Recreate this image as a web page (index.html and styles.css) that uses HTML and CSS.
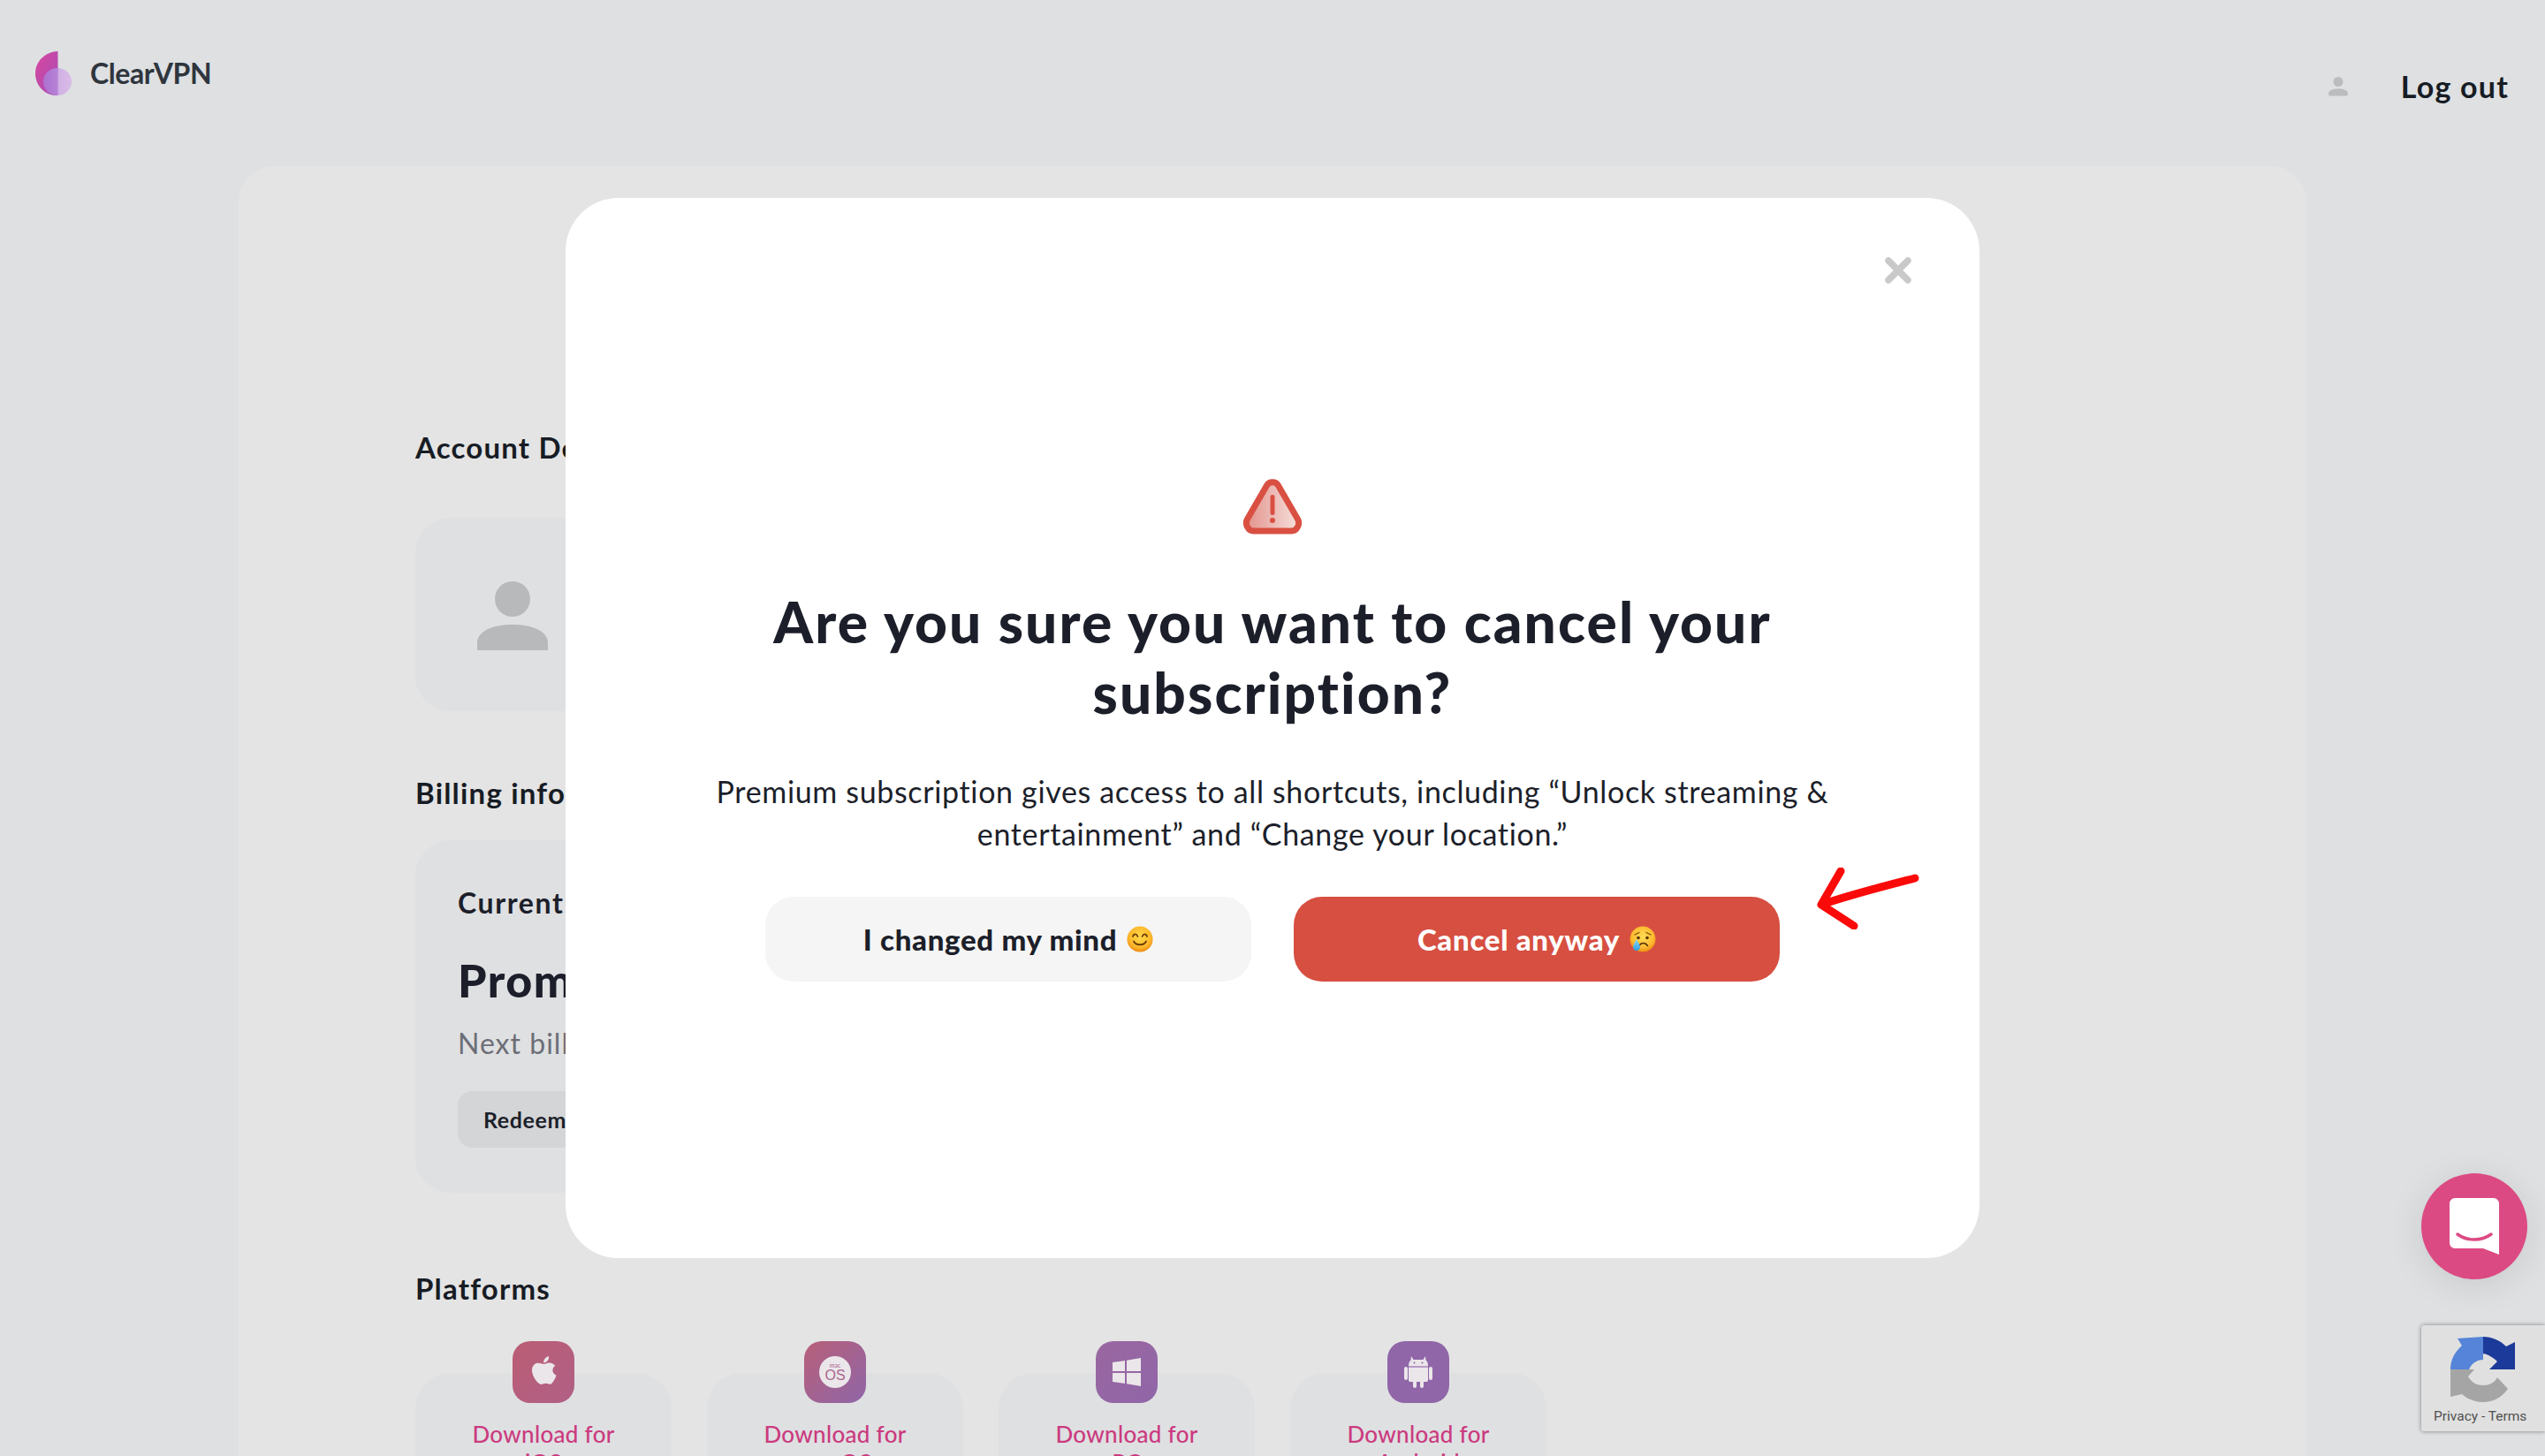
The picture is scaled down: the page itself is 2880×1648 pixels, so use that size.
FILE: index.html
```html
<!DOCTYPE html>
<html lang="en">
<head>
<meta charset="utf-8">
<title>ClearVPN</title>
<link rel="stylesheet" href="styles.css">
</head>
<body>
<header class="topbar">
  <div class="brand">
    <svg class="brand-logo" viewBox="0 0 41 50" aria-hidden="true">
      <defs>
        <linearGradient id="lg1" x1="0" y1="0" x2="1" y2="1"><stop offset="0" stop-color="#d8469c"/><stop offset="1" stop-color="#a84cb8"/></linearGradient>
        <linearGradient id="lg2" x1="0" y1="0" x2="1" y2="0"><stop offset="0" stop-color="#ad70d0"/><stop offset=".5" stop-color="#b683d6"/><stop offset=".55" stop-color="#d2b0e4"/><stop offset="1" stop-color="#d9bce6"/></linearGradient>
      </defs>
      <path d="M25.500 0C10 1 0 12 0 25C0 38 9 49 23 50L25.500 50Z" fill="url(#lg1)"/>
      <ellipse cx="25" cy="34.500" rx="16" ry="15.500" fill="url(#lg2)"/>
    </svg>
    <span class="brand-name">ClearVPN</span>
  </div>
  <nav class="account-nav">
    <svg class="nav-user" viewBox="0 0 22 22" aria-hidden="true"><ellipse cx="11" cy="5.500" rx="5.500" ry="5.500" fill="#bbbcbe"/><path d="M0 19C0 15 5 13.500 11 13.500C17 13.500 22 15 22 19C22 21 21 21.500 20 21.500H2C1 21.500 0 21 0 19Z" fill="#bbbcbe"/></svg>
    <a class="logout">Log out</a>
  </nav>
</header>

<main class="panel">
  <section class="section section-account">
    <h2 class="section-title">Account Details</h2>
    <div class="card card-account">
      <svg class="avatar" viewBox="0 0 80 78" aria-hidden="true"><ellipse cx="40" cy="20" rx="20" ry="20" fill="#b8b9bb"/><path d="M0 70C0 56 18 49 40 49C62 49 80 56 80 70V78H0Z" fill="#b8b9bb"/></svg>
    </div>
  </section>
  <section class="section section-billing">
    <h2 class="section-title">Billing info</h2>
    <div class="card card-billing">
      <div class="plan-label">Current plan</div>
      <div class="plan-name">Promo plan</div>
      <div class="plan-next">Next billing date</div>
      <button class="redeem">Redeem code</button>
    </div>
  </section>
  <section class="section section-platforms">
    <h2 class="section-title">Platforms</h2>
    <div class="platforms">
      <div class="platform">
        <span class="platform-icon icon-ios"><svg viewBox="0 0 30 36" width="30" height="36" aria-hidden="true"><path d="M15.500 9C17 9 19 7.500 21.500 7.500C24.500 7.500 26.800 9 28.200 11C24 13.500 24.700 19.800 29.500 21.800C28.500 25 26 30 23.500 31.500C21.500 32.500 20 30.800 17.500 30.800C15 30.800 13.500 32.500 11.500 31.800C7 30 1.500 21 2 15C2.400 10.500 5.500 7.800 9 7.800C11.500 7.800 13.500 9 15.500 9Z" fill="#ebe6ea"/><path d="M15 7.500C15 4 17.500 1 21 0C21.500 3.500 19 7.500 15 7.500Z" fill="#ebe6ea"/></svg></span>
        <a class="platform-link">Download for iOS</a>
      </div>
      <div class="platform">
        <span class="platform-icon icon-mac"><span class="mac-badge"><span class="mac-small">mac</span><span class="mac-os">OS</span></span></span>
        <a class="platform-link">Download for macOS</a>
      </div>
      <div class="platform">
        <span class="platform-icon icon-win"><svg viewBox="0 0 32 32" width="32" height="32" aria-hidden="true"><path d="M0 5L14 3V15H0ZM16 2.700L32 0V15H16ZM0 17H14V29L0 27ZM16 17H32V32L16 29.300Z" fill="#ebe6ea"/></svg></span>
        <a class="platform-link">Download for PC</a>
      </div>
      <div class="platform">
        <span class="platform-icon icon-android"><svg viewBox="0 0 32 36" width="32" height="36" aria-hidden="true"><path d="M8 0L10.500 4H21.500L24 0L24.500 4.500C26.500 6 27 9 27 11H5C5 9 5.500 6 7.500 4.500Z" fill="#ebe6ea"/><path d="M5 12.500H27V27C27 28.500 26 29 25 29H7C6 29 5 28.500 5 27Z" fill="#ebe6ea"/><rect x="0" y="12" width="4" height="15" rx="2" fill="#ebe6ea"/><rect x="28" y="12" width="4" height="15" rx="2" fill="#ebe6ea"/><rect x="10" y="27" width="4" height="9" rx="2" fill="#ebe6ea"/><rect x="18" y="27" width="4" height="9" rx="2" fill="#ebe6ea"/><circle cx="11.500" cy="7.500" r="1" fill="#9166a6"/><circle cx="20.500" cy="7.500" r="1" fill="#9166a6"/><rect x="5" y="11" width="22" height="2" fill="#b99bc6"/></svg></span>
        <a class="platform-link">Download for Android</a>
      </div>
    </div>
  </section>
</main>

<div class="modal" role="dialog">
  <svg class="modal-close" viewBox="0 0 30 30" aria-hidden="true"><path d="M4 4L26 26M26 4L4 26" stroke="#c9c9c9" stroke-width="7.500" stroke-linecap="round"/></svg>
  <svg class="warning" viewBox="0 0 68 63" aria-hidden="true">
    <defs><linearGradient id="wg" x1="0" y1="0" x2="1" y2="0"><stop offset="0" stop-color="#e2938c"/><stop offset="1" stop-color="#f6e0dc"/></linearGradient></defs>
    <path d="M27.500 7.500C30.500 2.500 37.500 2.500 40.500 7.500L62.500 45.500C65.500 51 62 59 55.500 59H12.500C6 59 2.500 51 5.500 45.500Z" fill="url(#wg)" stroke="#d95042" stroke-width="7" stroke-linejoin="round"/>
    <rect x="31.500" y="18" width="5" height="23" rx="2.500" fill="#d95042"/>
    <circle cx="34" cy="47" r="3" fill="#d95042"/>
  </svg>
  <h1 class="modal-title">Are you sure you want to cancel your subscription?</h1>
  <p class="modal-text">Premium subscription gives access to all shortcuts, including “Unlock streaming &amp; entertainment” and “Change your location.”</p>
  <div class="modal-actions">
    <button class="btn btn-keep">I changed my mind
      <svg class="emoji" viewBox="0 0 30 30" aria-hidden="true"><defs><radialGradient id="eg1" cx=".5" cy=".4" r=".6"><stop offset="0" stop-color="#ffd84a"/><stop offset=".7" stop-color="#fdb92c"/><stop offset="1" stop-color="#ee8a12"/></radialGradient></defs><circle cx="15" cy="15" r="14.500" fill="url(#eg1)"/><path d="M7 12C8 8.500 11 8.500 12.500 12M17.500 12C19 8.500 22 8.500 23 12" fill="none" stroke="#6d3c06" stroke-width="1.800" stroke-linecap="round"/><path d="M8 17.500C10.500 22.500 19.500 22.500 22 17.500" fill="none" stroke="#6d3c06" stroke-width="1.800" stroke-linecap="round"/></svg>
    </button>
    <button class="btn btn-cancel">Cancel anyway
      <svg class="emoji" viewBox="0 0 30 30" aria-hidden="true"><defs><radialGradient id="eg2" cx=".5" cy=".4" r=".6"><stop offset="0" stop-color="#ffdc55"/><stop offset=".7" stop-color="#fdbb30"/><stop offset="1" stop-color="#ee8a12"/></radialGradient><linearGradient id="eg3" x1="0" y1="0" x2="0" y2="1"><stop offset="0" stop-color="#8ed8f5"/><stop offset="1" stop-color="#2f9fe0"/></linearGradient></defs><circle cx="15" cy="15" r="14.500" fill="url(#eg2)"/><circle cx="10" cy="13.500" r="1.800" fill="#5a3408"/><circle cx="20" cy="13.500" r="1.800" fill="#5a3408"/><path d="M6 10L11 7.500M24 10L19 7.500" stroke="#7a4a0c" stroke-width="1.300" stroke-linecap="round"/><path d="M11 22.500C13 18.500 18 18.500 20.500 22.500" fill="none" stroke="#5a3408" stroke-width="1.600" stroke-linecap="round"/><path d="M8 15C6 19 4 21.500 4 24C4 26.500 6 28 8 28C10 28 12 26.500 12 24C12 21.500 10 19 8 15Z" fill="url(#eg3)"/></svg>
    </button>
  </div>
  <svg class="annotation" viewBox="0 0 116 70" aria-hidden="true"><path d="M111 12C80 20 40 30 5 42M27 4L5 42L42 66" fill="none" stroke="#fb0a0a" stroke-width="9" stroke-linecap="round" stroke-linejoin="round"/></svg>
</div>

<button class="chat" aria-label="Chat"><svg viewBox="0 0 56 64" width="56" height="64" aria-hidden="true"><path d="M6 0H50C53 0 56 3 56 6V64L38 57H6C3 57 0 54 0 51V6C0 3 3 0 6 0Z" fill="#fff"/><path d="M9 41C20 49 36 49 47 41" fill="none" stroke="#dc4a83" stroke-width="3.500" stroke-linecap="round"/></svg></button>

<aside class="recaptcha">
  <svg class="recaptcha-logo" viewBox="0 0 74 75" aria-hidden="true">
    <path d="M0 37C0 26 5 17 13 10L8 2L37 0V26C30 26 24 30 21 37Z" fill="#5584d8"/>
    <path d="M37 0C47 0 56 4 63 11L73 6V37H44L53 28C49 24 43 20 37 19Z" fill="#1c3a99"/>
    <path d="M0 37H27L20 45C24 52 30 55 37 55C44 55 50 52 53 46L65 59C58 69 48 74 37 74C28 74 20 71 13 65L0 68Z" fill="#a5a5a5"/>
  </svg>
  <span class="recaptcha-text">Privacy - Terms</span>
</aside>
</body>
</html>
```

FILE: styles.css
```css
* { box-sizing: border-box; }
html, body { margin: 0; height: 1648px; overflow: hidden; }
body {
  position: relative;
  background: #dee0e2;
  font-family: "Lato", "Liberation Sans", sans-serif;
  font-variant-ligatures: none;
  color: #1c1f2a;
}
h1, h2, p { margin: 0; }

.topbar {
  height: 188px;
  padding: 58px 41px 0 40px;
  display: flex;
  justify-content: space-between;
  align-items: flex-start;
}
.brand { display: flex; align-items: center; gap: 21px; }
.brand-logo { width: 41px; height: 50px; }
.brand-name { font-size: 32px; font-weight: 700; color: #2f353d; letter-spacing: -.4px; margin-top: -2px; }
.account-nav { display: flex; align-items: center; gap: 60px; margin-top: 19px; }
.nav-user { width: 22px; height: 22px; }
.logout { font-size: 34px; font-weight: 700; color: #171c24; letter-spacing: 1.200px; }

.panel {
  width: 2340px;
  height: 1460px;
  margin-left: 270px;
  padding: 298px 860px 0 200px;
  background: #e4e4e4;
  border-radius: 40px 40px 0 0;
  overflow: hidden;
}
.section-title { font-size: 33px; line-height: 40px; font-weight: 700; color: #171c24; letter-spacing: 1.200px; white-space: nowrap; }
.card { background: #dfe0e2; border-radius: 40px; }
.card-account { height: 219px; margin-top: 60px; padding: 72px 70px; }
.avatar { display: block; width: 80px; height: 78px; }
.section-billing { margin-top: 72px; }
.card-billing { height: 399px; margin-top: 34px; padding: 51px 48px; }
.plan-label { font-size: 32px; line-height: 40px; font-weight: 700; letter-spacing: 1.600px; white-space: nowrap; }
.plan-name { font-size: 52px; line-height: 60px; font-weight: 900; margin-top: 37px; letter-spacing: 1.500px; white-space: nowrap; }
.plan-next { font-size: 32px; line-height: 40px; color: #6c6e76; margin-top: 22px; letter-spacing: 1px; white-space: nowrap; }
.redeem {
  display: block;
  height: 64px;
  margin-top: 34px;
  padding: 0 29px;
  border: 0;
  border-radius: 16px;
  background: #d4d5d7;
  font: 700 25px "Lato", sans-serif;
  color: #1c1f2a;
  letter-spacing: .6px;
  white-space: nowrap;
}
.section-platforms { margin-top: 88px; }
.platforms { display: flex; gap: 40px; margin-top: 76px; }
.platform {
  width: 290px;
  height: 240px;
  background: #dfe0e2;
  border-radius: 40px;
  display: flex;
  flex-direction: column;
  align-items: center;
  text-align: center;
}
.platform-icon {
  width: 70px;
  height: 70px;
  margin-top: -36px;
  border-radius: 20px;
  display: flex;
  align-items: center;
  justify-content: center;
  flex: none;
}
.icon-ios { background: linear-gradient(135deg, #bb5d74, #b06086); }
.icon-mac { background: linear-gradient(135deg, #b85f78, #8f66a8); }
.icon-win { background: linear-gradient(135deg, #9a67a0, #9066a8); }
.icon-android { background: #9066a8; }
.mac-badge {
  width: 36px; height: 36px;
  border-radius: 50%;
  background: #ebe6ea;
  color: #a9648f;
  display: flex;
  flex-direction: column;
  align-items: center;
  justify-content: center;
  line-height: 1;
}
.mac-small { font-size: 7px; }
.mac-os { font-size: 16px; font-family: "Liberation Sans", sans-serif; }
.platform-link {
  display: block;
  width: 180px;
  margin-top: 19px;
  font-size: 26px;
  line-height: 32px;
  font-weight: 500;
  color: #cb3b7f;
  letter-spacing: .3px;
}

.modal {
  position: absolute;
  left: 640px;
  top: 224px;
  width: 1600px;
  height: 1200px;
  background: #fff;
  border-radius: 60px;
  display: flex;
  flex-direction: column;
  align-items: center;
  padding-top: 318px;
}
.modal-close { position: absolute; left: 1493px; top: 67px; width: 30px; height: 30px; }
.warning { display: block; width: 68px; height: 63px; }
.modal-title {
  width: 1200px;
  margin-top: 59px;
  font-size: 64px;
  line-height: 80px;
  font-weight: 900;
  text-align: center;
  color: #1c1f2a;
  letter-spacing: 2.100px;
}
.modal-text {
  width: 1300px;
  margin-top: 48px;
  font-size: 34px;
  line-height: 48px;
  text-align: center;
  color: #1c1f2a;
  letter-spacing: .65px;
}
.modal-actions { display: flex; gap: 48px; margin-top: 47px; }
.btn {
  width: 550px;
  height: 96px;
  border: 0;
  border-radius: 32px;
  display: flex;
  align-items: center;
  justify-content: center;
  gap: 11px;
  font: 900 33px "Lato", sans-serif;
  letter-spacing: .7px;
}
.btn-keep { background: #f5f5f5; color: #1c1f2a; }
.btn-cancel { background: #d64f40; color: #fff; }
.emoji { width: 30px; height: 30px; }
.annotation { position: absolute; left: 1416px; top: 758px; width: 116px; height: 70px; }

.chat {
  position: absolute;
  left: 2740px;
  top: 1328px;
  width: 120px;
  height: 120px;
  padding: 0;
  border: 0;
  border-radius: 50%;
  background: #dc4a83;
  box-shadow: 0 6px 40px rgba(0, 0, 0, .1);
  display: flex;
  align-items: center;
  justify-content: center;
}
.recaptcha {
  position: absolute;
  left: 2740px;
  top: 1500px;
  width: 140px;
  height: 120px;
  padding-top: 13px;
  background: #e0e0e0;
  border-radius: 3px 0 0 3px;
  box-shadow: 0 0 5px rgba(0, 0, 0, .45);
  display: flex;
  flex-direction: column;
  align-items: flex-start;
}
.recaptcha-logo { width: 74px; height: 75px; margin-left: 33px; filter: blur(.6px); }
.recaptcha-text {
  margin: 6px 0 0 14px;
  font: 15.500px "Roboto", sans-serif;
  color: #505050;
  white-space: nowrap;
}
```
